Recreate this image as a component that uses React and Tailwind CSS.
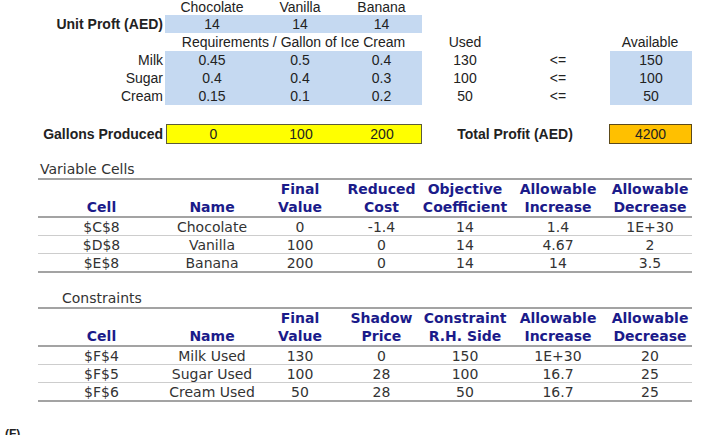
import React from 'react';

const cols = 'grid grid-cols-[38px_127px_94px_82px_81px_86px_100px_84px]';

const resources = [
  { name: 'Milk', req: ['0.45', '0.5', '0.4'], used: '130', avail: '150' },
  { name: 'Sugar', req: ['0.4', '0.4', '0.3'], used: '100', avail: '100' },
  { name: 'Cream', req: ['0.15', '0.1', '0.2'], used: '50', avail: '50' },
];

const variableCells = {
  title: 'Variable Cells',
  indent: 'pl-[2px]',
  headers: [
    ['', 'Cell'],
    ['', 'Name'],
    ['Final', 'Value'],
    ['Reduced', 'Cost'],
    ['Objective', 'Coefficient'],
    ['Allowable', 'Increase'],
    ['Allowable', 'Decrease'],
  ],
  rows: [
    ['$C$8', 'Chocolate', '0', '-1.4', '14', '1.4', '1E+30'],
    ['$D$8', 'Vanilla', '100', '0', '14', '4.67', '2'],
    ['$E$8', 'Banana', '200', '0', '14', '14', '3.5'],
  ],
};

const constraints = {
  title: 'Constraints',
  indent: 'pl-[24px]',
  headers: [
    ['', 'Cell'],
    ['', 'Name'],
    ['Final', 'Value'],
    ['Shadow', 'Price'],
    ['Constraint', 'R.H. Side'],
    ['Allowable', 'Increase'],
    ['Allowable', 'Decrease'],
  ],
  rows: [
    ['$F$4', 'Milk Used', '130', '0', '150', '1E+30', '20'],
    ['$F$5', 'Sugar Used', '100', '28', '100', '16.7', '25'],
    ['$F$6', 'Cream Used', '50', '28', '50', '16.7', '25'],
  ],
};

const SensitivityTable = ({ table, className }) => (
  <div className={`${cols} font-['DejaVu_Sans',sans-serif] text-[14px] leading-[18px] ${className}`}>
    {/* Title */}
    <div className={`col-start-2 col-span-7 h-[20px] border-b-2 border-[#a3a3a3] text-[#333] ${table.indent}`}>
      {table.title}
    </div>

    {/* Header */}
    {table.headers.map((h, i) => (
      <div
        key={i}
        className={`${i === 0 ? 'col-start-2' : ''} h-[38px] flex flex-col justify-end text-center font-bold text-[#1b1b8a] border-b-2 border-[#a3a3a3] whitespace-nowrap`}
      >
        {h[0] && <span>{h[0]}</span>}
        <span>{h[1]}</span>
      </div>
    ))}

    {/* Rows */}
    {table.rows.map((row, r) => {
      const last = r === table.rows.length - 1;
      return row.map((v, c) => (
        <div
          key={`${r}-${c}`}
          className={`${c === 0 ? 'col-start-2' : ''} text-center text-[#333] whitespace-nowrap ${
            last ? 'h-[19px] border-b-2 border-[#a3a3a3]' : 'h-[18px] border-b border-[#cdcdcd]'
          }`}
        >
          {v}
        </div>
      ));
    })}
  </div>
);

const App = () => {
  return (
    <div className="w-[715px] h-[435px] overflow-hidden bg-white">
      {/* Model section */}
      <div className={`${cols} font-['Liberation_Sans',Arial,sans-serif] text-[14px] leading-[18px] text-[#222]`}>
        {/* Flavour headers */}
        <div className="col-start-3 h-[15px] leading-[14px] text-center">Chocolate</div>
        <div className="h-[15px] leading-[14px] text-center">Vanilla</div>
        <div className="h-[15px] leading-[14px] text-center">Banana</div>

        {/* Unit profit */}
        <div className="col-start-2 h-[18px] text-right pr-[2px] font-bold">Unit Proft (AED)</div>
        <div className="h-[18px] bg-[#c5d9f1] text-center">14</div>
        <div className="h-[18px] bg-[#c5d9f1] text-center">14</div>
        <div className="h-[18px] bg-[#c5d9f1] text-center">14</div>

        {/* Requirements header */}
        <div className="col-start-3 col-span-3 h-[18px] text-center">Requirements / Gallon of Ice Cream</div>
        <div className="h-[18px] text-center">Used</div>
        <div className="col-start-8 h-[18px] text-center">Available</div>

        {/* Resource rows */}
        {resources.map((res) => (
          <React.Fragment key={res.name}>
            <div className="col-start-2 h-[18px] text-right pr-[2px]">{res.name}</div>
            {res.req.map((v, i) => (
              <div key={i} className="h-[18px] bg-[#c5d9f1] text-center">{v}</div>
            ))}
            <div className="h-[18px] text-center">{res.used}</div>
            <div className="h-[18px] text-center">&lt;=</div>
            <div className="h-[18px] ml-[2px] bg-[#c5d9f1] text-center">{res.avail}</div>
          </React.Fragment>
        ))}

        {/* Blank row */}
        <div className="col-span-8 h-[19px]"></div>

        {/* Gallons produced / total profit */}
        <div className="col-start-2 h-[20px] leading-[20px] text-right pr-[2px] font-bold">Gallons Produced</div>
        <div className="col-span-3 h-[20px] ml-[1px] grid grid-cols-[93px_82px_80px] bg-[#ffff00] border border-[#5c5c3a] leading-[18px] text-center">
          <div>0</div>
          <div>100</div>
          <div>200</div>
        </div>
        <div className="col-span-2 h-[20px] leading-[20px] text-center font-bold">Total Profit (AED)</div>
        <div className="h-[20px] ml-[1px] bg-[#ffc000] border border-[#5c4a1a] leading-[18px] text-center">4200</div>
      </div>

      {/* Sensitivity report */}
      <SensitivityTable table={variableCells} className="mt-[16px]" />
      <SensitivityTable table={constraints} className="mt-[16px]" />

      <div className="mt-[25px] pl-[5px] font-['Liberation_Sans',Arial,sans-serif] text-[12px] font-bold leading-[14px] text-[#222]">
        (F)
      </div>
    </div>
  );
};

export default App;
